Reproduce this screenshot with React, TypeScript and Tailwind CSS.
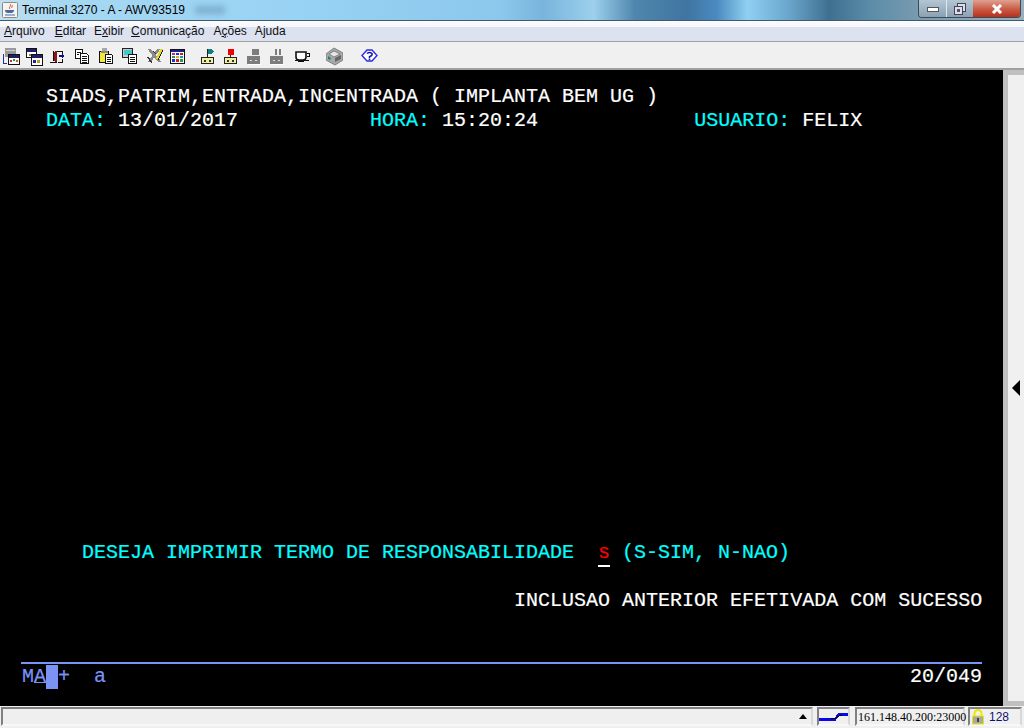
import type { ReactNode } from 'react';

const MONO = "font-['Liberation_Mono',monospace] [-webkit-text-stroke:0.2px]";

function Row({ children, className = '' }: { children?: ReactNode; className?: string }) {
  return <div className={`h-6 leading-6 whitespace-pre ${className}`}>{children}</div>;
}

// toolbar glyphs are drawn in a 17x19 box, pixel for pixel
function Ico({ children, className = '' }: { children: ReactNode; className?: string }) {
  return (
    <svg viewBox="0 0 17 19" className={`w-[17px] h-[19px] shrink-0 ${className}`} shapeRendering="crispEdges">
      {children}
    </svg>
  );
}

function Device({ top }: { top: ReactNode }) {
  return (
    <Ico>
      {top}
      <rect x="1.5" y="10.5" width="12" height="6" fill="#f2f0a0" stroke="#222" />
      <rect x="4" y="13" width="2" height="2" fill="#333" />
      <rect x="9" y="13" width="2" height="2" fill="#333" />
    </Ico>
  );
}

function GreyDevice({ top }: { top: ReactNode }) {
  return (
    <Ico>
      {top}
      <rect x="1" y="9" width="13" height="8" fill="#7d7d7d" />
      <rect x="4" y="13" width="2" height="1" fill="#ddd" />
      <rect x="9" y="13" width="2" height="1" fill="#ddd" />
      <rect x="2" y="17" width="13" height="1" fill="#fff" />
    </Ico>
  );
}

function MiniWindow({ x, y, w = 10, h = 9, title = '#20206a' }: { x: number; y: number; w?: number; h?: number; title?: string }) {
  return (
    <>
      <rect x={x + 0.5} y={y + 0.5} width={w} height={h} fill="#fff" stroke="#111" />
      <rect x={x + 1} y={y + 1} width={w - 1} height="3" fill={title} />
    </>
  );
}

function Toolbar() {
  return (
    <div className="h-[28px] bg-[#f0f0f0] border-b-2 border-[#a0a0a0] flex items-start pt-[5px] pl-[3px] shrink-0">
      <Ico>
        <rect x="2" y="1" width="11" height="9" fill="#9a9a9a" />
        <rect x="3" y="3" width="9" height="1" fill="#d0d0d0" />
        <path d="M0.5 7v9H4" fill="none" stroke="#2030a0" />
        <MiniWindow x={5} y={7} w={11} h={10} />
        <rect x="7" y="13" width="2" height="2" fill="#e02030" />
        <rect x="10" y="12" width="2" height="2" fill="#20a040" />
        <rect x="13" y="13" width="2" height="2" fill="#d06020" />
      </Ico>
      <Ico className="ml-[6px]">
        <MiniWindow x={0} y={1} />
        <rect x="3" y="7" width="2" height="2" fill="#808080" />
        <rect x="7" y="7" width="2" height="2" fill="#808080" />
        <MiniWindow x={5} y={7} w={11} h={11} />
        <rect x="7" y="13" width="3" height="3" fill="#2020a0" />
        <rect x="11" y="13" width="3" height="3" fill="#b0a020" />
      </Ico>
      <Ico className="ml-[6px]">
        <path d="M4 5l4-1v11l-4-1z" fill="#8a1818" />
        <path d="M1 15h7M8 4h5v4M13 12v3H9" fill="none" stroke="#111" />
        <rect x="4" y="4" width="1" height="10" fill="#111" />
        <path d="M10 9h4" stroke="#10107a" strokeWidth="2" fill="none" />
        <path d="M13 7h1v1h1v2h-1v1h-1z" fill="#10107a" />
      </Ico>
      <Ico className="ml-[9px]">
        <rect x="0.5" y="2.5" width="7" height="9" fill="#fff" stroke="#111" />
        <path d="M2 5h4M2 7h2" stroke="#111" fill="none" />
        <path d="M5.5 6.5h6l2 2v8h-8z" fill="#fff" stroke="#111" />
        <path d="M7 9h5M7 11h5M7 13h5M7 15h5" stroke="#111" fill="none" />
      </Ico>
      <Ico className="ml-[6px]">
        <rect x="1.5" y="4.5" width="9" height="11" fill="#f2e83a" stroke="#111" />
        <rect x="4" y="1" width="5" height="5" fill="#a8a8a8" />
        <rect x="3" y="4" width="7" height="2" fill="#888" />
        <path d="M7.5 7.5h6l1 1v8h-7z" fill="#fff" stroke="#111" />
        <path d="M9 10h4M9 12h4M9 14h4" stroke="#111" fill="none" />
      </Ico>
      <Ico className="ml-[6px]">
        <rect x="1.5" y="1.5" width="10" height="9" fill="#c4cccc" stroke="#222" />
        <rect x="3" y="3" width="8" height="5" fill="#40c8c8" />
        <rect x="7.5" y="7.5" width="8" height="9" fill="#fff" stroke="#111" />
        <path d="M9 10h5M9 12h5M9 14h5" stroke="#111" fill="none" />
      </Ico>
      <Ico className="ml-[9px]">
        <path d="M2 2l11 13M12 2L2 15" stroke="#8a8a8a" strokeWidth="2.6" fill="none" />
        <path d="M1 10l4 6M6 4l3 3" stroke="#333" strokeWidth="1.4" fill="none" />
        <path d="M15 2l-5 10" stroke="#e8d820" strokeWidth="2.4" fill="none" />
        <path d="M16 3l-5 10" stroke="#222" strokeWidth="1" fill="none" />
      </Ico>
      <Ico className="ml-[5px]">
        <rect x="1.5" y="2.5" width="14" height="14" fill="#fff" stroke="#111" />
        <rect x="2" y="3" width="13" height="2" fill="#20208a" />
        <rect x="3" y="6" width="3" height="2" fill="#c020c0" />
        <rect x="7" y="6" width="3" height="2" fill="#2030d0" />
        <rect x="11" y="6" width="3" height="2" fill="#c02020" />
        <rect x="3" y="9" width="3" height="2" fill="#20a040" />
        <rect x="7" y="9" width="3" height="2" fill="#d0b020" />
        <rect x="11" y="9" width="3" height="2" fill="#2090c0" />
        <rect x="3" y="12" width="3" height="3" fill="#2030d0" />
        <rect x="7" y="12" width="3" height="3" fill="#c02020" />
        <rect x="11" y="12" width="3" height="3" fill="#20a040" />
      </Ico>
      <div className="ml-[14px] flex gap-[6px]">
        <Device top={<><rect x="7" y="2" width="1" height="8" fill="#222" /><path d="M8 2h3l3 2.5L11 7H8z" fill="#0f7f7f" /></>} />
        <Device top={<><rect x="7" y="8" width="1" height="2" fill="#222" /><circle cx="8" cy="5" r="3.5" fill="#f00000" /></>} />
        <GreyDevice top={<rect x="6" y="2" width="7" height="6" fill="#7d7d7d" />} />
        <GreyDevice top={<><rect x="6" y="2" width="2" height="6" fill="#7d7d7d" /><rect x="10" y="2" width="2" height="6" fill="#7d7d7d" /></>} />
      </div>
      <Ico className="ml-[8px]">
        <path d="M2 5h10v5q0 3-3 3H5q-3 0-3-3z" fill="#fff" stroke="#111" strokeWidth="1.6" shapeRendering="auto" />
        <path d="M12.5 6.5h3v3h-3" fill="none" stroke="#111" strokeWidth="1.4" />
        <rect x="1" y="13" width="14" height="1" fill="#111" />
        <rect x="4" y="14" width="6" height="1" fill="#111" />
      </Ico>
      <Ico className="ml-[15px]">
        <g shapeRendering="auto">
          <path d="M0 7l8-6 9 5v7l-8 5-9-5z" fill="#a8a8a8" stroke="#808080" />
          <path d="M3 7l5-3 6 3-6 3z" fill="#e8e8e8" stroke="#666" strokeWidth="0.7" />
          <path d="M2 9l3 2-1 2-2-1z" fill="#208080" />
          <path d="M9 11l6-3v4l-6 3z" fill="#666" />
        </g>
      </Ico>
      <Ico className="ml-[18px]">
        <g shapeRendering="auto">
          <path d="M1 8.5L6 3h5l5 5.5-5 5.5H6z" fill="#fff" stroke="#2a2ae8" strokeWidth="1.4" />
          <path d="M6 6.5q2.5-2 5 0 .8 2-2.5 3.2V11" fill="none" stroke="#1818a8" strokeWidth="1.6" />
          <rect x="7.7" y="11.5" width="1.6" height="1.6" fill="#1818a8" />
        </g>
      </Ico>
    </div>
  );
}

function Terminal() {
  return (
    <div className={`flex-1 min-w-0 bg-black pt-[15px] pl-[22px] text-[20px] text-white ${MONO}`}>
      <Row>{'  SIADS,PATRIM,ENTRADA,INCENTRADA ( IMPLANTA BEM UG )'}</Row>
      <Row>
        <span className="text-[#00ffff]">{'  DATA:'}</span>
        {' 13/01/2017'}
        <span className="text-[#00ffff]">{'           HORA:'}</span>
        {' 15:20:24'}
        <span className="text-[#00ffff]">{'             USUARIO:'}</span>
        {' FELIX'}
      </Row>
      <div className="h-[408px]" />
      <Row className="text-[#00ffff]">
        {'     DESEJA IMPRIMIR TERMO DE RESPONSABILIDADE  '}
        <span className="inline-block w-3 h-[26px] align-top border-b-2 border-white text-[#ff0000]">s</span>
        {' (S-SIM, N-NAO)'}
      </Row>
      <Row />
      <Row>{'                                         INCLUSAO ANTERIOR EFETIVADA COM SUCESSO'}</Row>
      <div className="h-[49px]" />
      <div className="w-[961px] -ml-px h-[2px] bg-[#7b93f5]" />
      <div className="w-[960px] h-6 mt-[1px] flex leading-6 text-[#7b93f5] whitespace-pre">
        <span>M</span>
        <span className="h-[18px] border-b border-[#7b93f5]">A</span>
        <span className="w-3 bg-[#7b93f5]" />
        <span>+</span>
        <span>{'  a'}</span>
        <span className="ml-auto text-white">20/049</span>
      </div>
    </div>
  );
}

function StatusBar() {
  const sunken = 'h-[19px] border-2 border-[#808080] border-r-[#d8d8d8] border-b-[#f8f8f8]';
  return (
    <div className="h-[22px] bg-[#f0f0f0] flex items-start pt-px pl-px font-['Liberation_Sans',sans-serif] shrink-0">
      <div className={`w-[812px] ${sunken} bg-[#efefef] flex items-center justify-end pr-[4px]`}>
        <div className="w-0 h-0 border-l-[4px] border-r-[4px] border-b-[5px] border-l-transparent border-r-transparent border-b-black" />
      </div>
      <div className={`ml-[4px] w-[33px] ${sunken} flex items-center justify-center`}>
        <svg viewBox="0 0 30 12" className="w-[29px] h-[12px]" shapeRendering="crispEdges">
          <path d="M0 7h16l4-5h10v3H21l-4 5H0z" fill="#0808e8" />
          <path d="M12 7h5l4-3h3v1h-3l-4 3h-5z" fill="#000" />
        </svg>
      </div>
      <div className={`ml-[5px] w-[110px] ${sunken} flex items-center pl-[1px] text-[12px] text-black font-['Liberation_Serif',serif] whitespace-nowrap`}>
        161.148.40.200:23000
      </div>
      <div className={`ml-[3px] w-[54px] ${sunken} flex items-center gap-[4px] pl-[1px] text-[12px] text-[#101070]`}>
        <svg viewBox="0 0 14 16" className="w-[14px] h-[16px]">
          <path d="M3.5 7V4.5a3.5 3.5 0 0 1 7 0V7" fill="none" stroke="#e8e800" strokeWidth="2" />
          <rect x="1.5" y="7" width="11" height="8" fill="#a8a8a8" stroke="#e8e800" />
          <rect x="6" y="9" width="2" height="4" fill="#444" />
        </svg>
        128
      </div>
    </div>
  );
}

export default function App() {
  return (
    <div className="w-[1024px] h-[728px] overflow-hidden flex flex-col bg-[#f0f0f0]">
      {/* title bar */}
      <div className="relative h-[21px] shrink-0 flex items-center pl-[2px] gap-[4px] bg-[linear-gradient(90deg,#c0e0ee_0%,#a6d8f2_6%,#98d2f4_29%,#8cc8ec_49%,#78b4dc_53%,#9cd0ec_58%,#4f86ad_62%,#3f75a0_67%,#4a8ac0_70%,#8fd0f2_73%,#6aa6cc_77%,#3f7090_81%,#5b8ca8_85%,#7a9cb0_90%,#9ab0bc_100%)] border-b border-[#3c5a70] font-['Liberation_Sans',sans-serif]">
        <svg viewBox="0 0 16 16" className="w-4 h-4 shrink-0">
          <rect x="0.5" y="0.5" width="15" height="15" rx="1" fill="#f4f4f4" stroke="#8a8a8a" />
          <path d="M8 2c2 2-2 3 0 5M10 3c1 1-1 2 0 3" stroke="#d05020" fill="none" />
          <path d="M3 8h9q0 3-3 3H6q-3 0-3-3z" fill="#4a6a9a" />
          <path d="M3 13h10" stroke="#4a6a9a" />
        </svg>
        <span className="text-[12px] text-black">Terminal 3270 - A - AWV93519</span>
        <div className="ml-[6px] w-[30px] h-[8px] bg-[#5d88a8]/50 blur-[3px]" />
        <div className="absolute right-[3px] top-0 h-[18px] flex border border-t-0 border-[#3a4a58] rounded-b-[4px] overflow-hidden">
          <div className="w-7 bg-[linear-gradient(#b4c6d4,#8ba1b2)] flex items-center justify-center pt-[2px] border-r border-[#e0e8ee]">
            <div className="w-[12px] h-[5px] bg-white border border-[#555]" />
          </div>
          <div className="w-[26px] bg-[linear-gradient(#b4c6d4,#8ba1b2)] flex items-center justify-center">
            <svg viewBox="0 0 12 12" className="w-3 h-3">
              <rect x="3.5" y="0.5" width="8" height="8" fill="#dde" stroke="#445" />
              <rect x="0.5" y="3.5" width="8" height="8" fill="#dde" stroke="#445" />
              <rect x="3" y="6" width="3" height="3" fill="#556" />
            </svg>
          </div>
          <div className="w-[47px] bg-[linear-gradient(#e0a090,#c85a44_55%,#b8301c)] flex items-center justify-center">
            <svg viewBox="0 0 12 10" className="w-[12px] h-[10px]">
              <path d="M2 1l8 8M10 1l-8 8" stroke="#fff" strokeWidth="3" />
            </svg>
          </div>
        </div>
      </div>
      {/* menu */}
      <div className="h-[21px] shrink-0 flex items-center pl-[4px] text-[12px] text-[#111] border-b border-[#a0a0a0] bg-[linear-gradient(#fbfbfd_0%,#f6f7fb_30%,#dde2f1_32%,#dde2f1_100%)] font-['Liberation_Sans',sans-serif]">
        <span><u>A</u>rquivo</span>
        <span className="ml-[10px]"><u>E</u>ditar</span>
        <span className="ml-[8px]">E<u>x</u>ibir</span>
        <span className="ml-[7px]"><u>C</u>omunicação</span>
        <span className="ml-[9px]">A<u>ç</u>ões</span>
        <span className="ml-[8px]">A<u>j</u>uda</span>
      </div>
      <Toolbar />
      {/* screen */}
      <div className="flex-1 min-h-0 flex">
        <Terminal />
        <div className="w-[21px] bg-[#c0c0c0] pl-[5px] py-[5px] flex">
          <div className="flex-1 bg-[#f0f0f0] flex items-center">
            <div className="w-0 h-0 ml-[4px] border-y-[8px] border-r-[8px] border-y-transparent border-r-black" />
          </div>
        </div>
      </div>
      <StatusBar />
    </div>
  );
}
